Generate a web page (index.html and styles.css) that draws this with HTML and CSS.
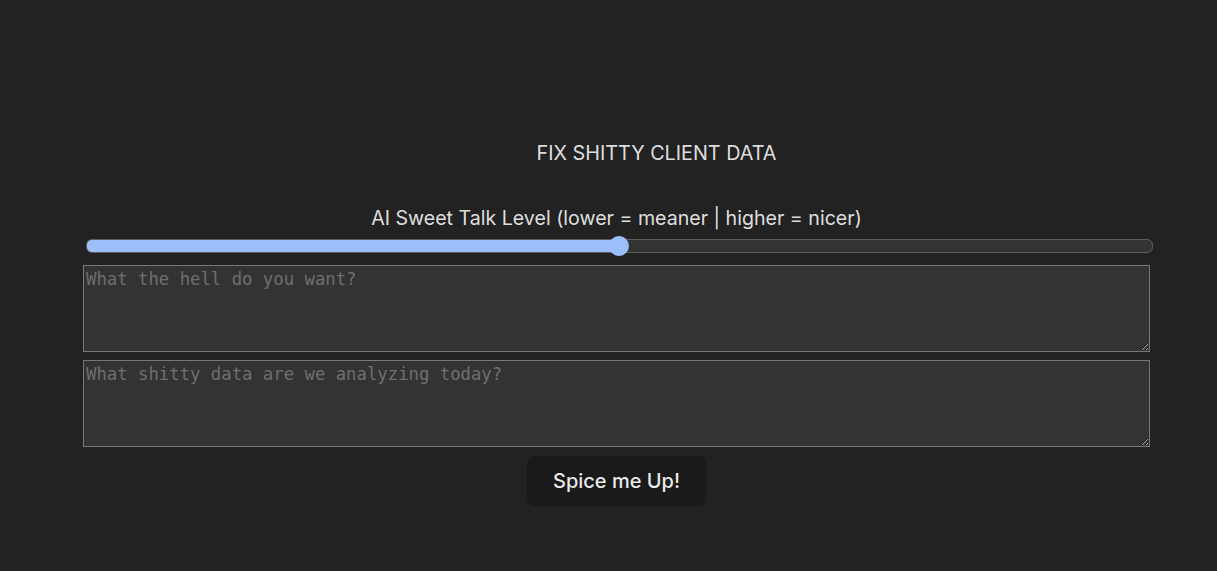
FILE: index.html
```html
<!DOCTYPE html>
<html>
<head>
<meta charset="utf-8">
<link rel="stylesheet" href="styles.css">
</head>
<body>
<main class="page">
  <h1 class="title">FIX SHITTY CLIENT DATA</h1>
  <label class="label" for="level">AI Sweet Talk Level (lower = meaner | higher = nicer)</label>
  <input class="slider" id="level" type="range" min="0" max="100" value="50">
  <textarea class="box" placeholder="What the hell do you want?"></textarea>
  <textarea class="box" placeholder="What shitty data are we analyzing today?"></textarea>
  <button class="btn">Spice me Up!</button>
</main>
</body>
</html>
```
FILE: styles.css
```css
html, body {
  margin: 0;
  padding: 0;
  background: #222222;
  color: rgba(255, 255, 255, 0.87);
  font-family: Inter, "Noto Sans", sans-serif;
}
.page {
  width: 1067px;
  margin-left: 83px;
  padding-top: 140px;
  display: flex;
  flex-direction: column;
  align-items: center;
}
.title {
  margin: 0;
  font-size: 19.8px;
  font-weight: 400;
  line-height: 26px;
  padding-left: 80px;
}
.label {
  margin-top: 39px;
  font-size: 19.6px;
  line-height: 26px;
}
.slider {
  -webkit-appearance: none;
  appearance: none;
  width: 1065px;
  margin: 8px 0 0 5px;
  height: 12px;
  border: 1px solid #5e5e5e;
  border-radius: 6px;
  background: linear-gradient(to right, #9bbff9 50%, #333333 50%);
  outline: none;
}
.slider::-webkit-slider-thumb {
  -webkit-appearance: none;
  appearance: none;
  width: 20px;
  height: 20px;
  border-radius: 50%;
  background: #9bbff9;
  border: none;
}
.box {
  box-sizing: border-box;
  width: 1067px;
  height: 87px;
  margin-top: 8px;
  background: #333333;
  border: 1px solid #777777;
  border-radius: 0;
  color: #ddd;
  font-family: "DejaVu Sans Mono", monospace;
  font-size: 17.3px;
  padding: 3px 2px;
}
.slider + .box {
  margin-top: 12px;
}
.box::placeholder {
  color: #6f6f6f;
}
.btn {
  margin-top: 9px;
  background: #1a1a1a;
  color: rgba(255, 255, 255, 0.92);
  border: none;
  border-radius: 8px;
  font-family: Inter, "Noto Sans", sans-serif;
  font-size: 20px;
  font-weight: 500;
  height: 50px;
  padding: 0 26px;
}
```
